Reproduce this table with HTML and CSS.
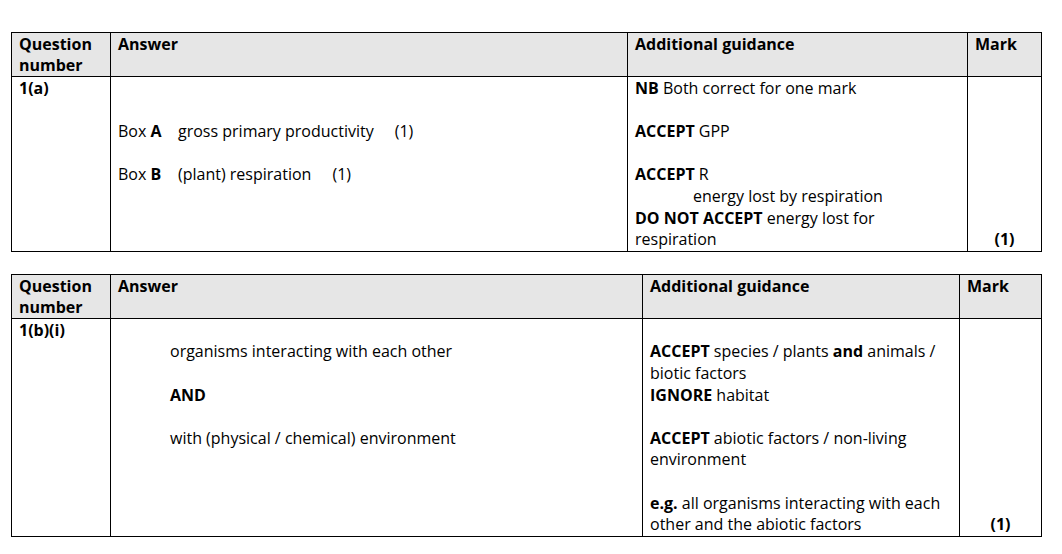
FILE: index.html
```html
<!DOCTYPE html>
<html>
<head>
<meta charset="utf-8">
<link rel="stylesheet" href="styles.css">
</head>
<body>
<table class="ms ms-a">
  <colgroup>
    <col class="c-q"><col class="c-ans-a"><col class="c-gd-a"><col class="c-mk-a">
  </colgroup>
  <thead>
    <tr>
      <th>Question number</th>
      <th>Answer</th>
      <th>Additional guidance</th>
      <th>Mark</th>
    </tr>
  </thead>
  <tbody>
    <tr>
      <td class="qn">1(a)</td>
      <td>
        <div class="line"></div>
        <div class="line"></div>
        <div class="line"><span class="lbl">Box <b>A</b></span>gross primary productivity<span class="pt">(1)</span></div>
        <div class="line"></div>
        <div class="line"><span class="lbl">Box <b>B</b></span>(plant) respiration<span class="pt">(1)</span></div>
      </td>
      <td>
        <div class="line"><b>NB</b> Both correct for one mark</div>
        <div class="line"></div>
        <div class="line"><b>ACCEPT</b> GPP</div>
        <div class="line"></div>
        <div class="line"><b>ACCEPT</b> R</div>
        <div class="line indent">energy lost by respiration</div>
        <div class="line"><b>DO NOT ACCEPT</b> energy lost for</div>
        <div class="line">respiration</div>
      </td>
      <td class="mark">(1)</td>
    </tr>
  </tbody>
</table>

<table class="ms ms-b">
  <colgroup>
    <col class="c-q"><col class="c-ans-b"><col class="c-gd-b"><col class="c-mk-b">
  </colgroup>
  <thead>
    <tr>
      <th>Question number</th>
      <th>Answer</th>
      <th>Additional guidance</th>
      <th>Mark</th>
    </tr>
  </thead>
  <tbody>
    <tr>
      <td class="qn">1(b)(i)</td>
      <td class="ans-ind">
        <div class="line"></div>
        <div class="line">organisms interacting with each other</div>
        <div class="line"></div>
        <div class="line"><b>AND</b></div>
        <div class="line"></div>
        <div class="line">with (physical / chemical) environment</div>
      </td>
      <td>
        <div class="line"></div>
        <div class="line"><b>ACCEPT</b> species / plants <b>and</b> animals /</div>
        <div class="line">biotic factors</div>
        <div class="line"><b>IGNORE</b> habitat</div>
        <div class="line"></div>
        <div class="line"><b>ACCEPT</b> abiotic factors / non-living</div>
        <div class="line">environment</div>
        <div class="line"></div>
        <div class="line"><b>e.g.</b> all organisms interacting with each</div>
        <div class="line">other and the abiotic factors</div>
      </td>
      <td class="mark">(1)</td>
    </tr>
  </tbody>
</table>
</body>
</html>
```

FILE: styles.css
```css
html, body {
  margin: 0;
  padding: 0;
  background: #ffffff;
}

body {
  padding: 32px 0 0 11px;
  font-family: "Open Sans", "Liberation Sans", sans-serif;
  font-size: 16px;
  color: #000000;
}

.ms {
  border-collapse: collapse;
  table-layout: fixed;
  width: 1030px;
}

.ms-b {
  margin-top: 22px;
}

.c-q { width: 99px; }
.c-ans-a { width: 517px; }
.c-gd-a { width: 340px; }
.c-mk-a { width: 74px; }
.c-ans-b { width: 532px; }
.c-gd-b { width: 317px; }
.c-mk-b { width: 82px; }

.ms th,
.ms td {
  border: 1px solid #000000;
  padding: 1px 7px 0;
  vertical-align: top;
  text-align: left;
  line-height: 21.6px;
}

.ms th {
  background: #e6e6e6;
  font-weight: 700;
  line-height: 21px;
}

.qn {
  font-weight: 700;
}

.line {
  height: 21.6px;
  white-space: nowrap;
}

.lbl {
  display: inline-block;
  width: 60px;
}

.pt {
  margin-left: 21px;
}

.indent {
  padding-left: 58px;
}

.ans-ind {
  padding-left: 59px !important;
}

.ms td.mark {
  vertical-align: bottom;
  text-align: center;
  font-weight: 700;
  padding: 0;
}
```
